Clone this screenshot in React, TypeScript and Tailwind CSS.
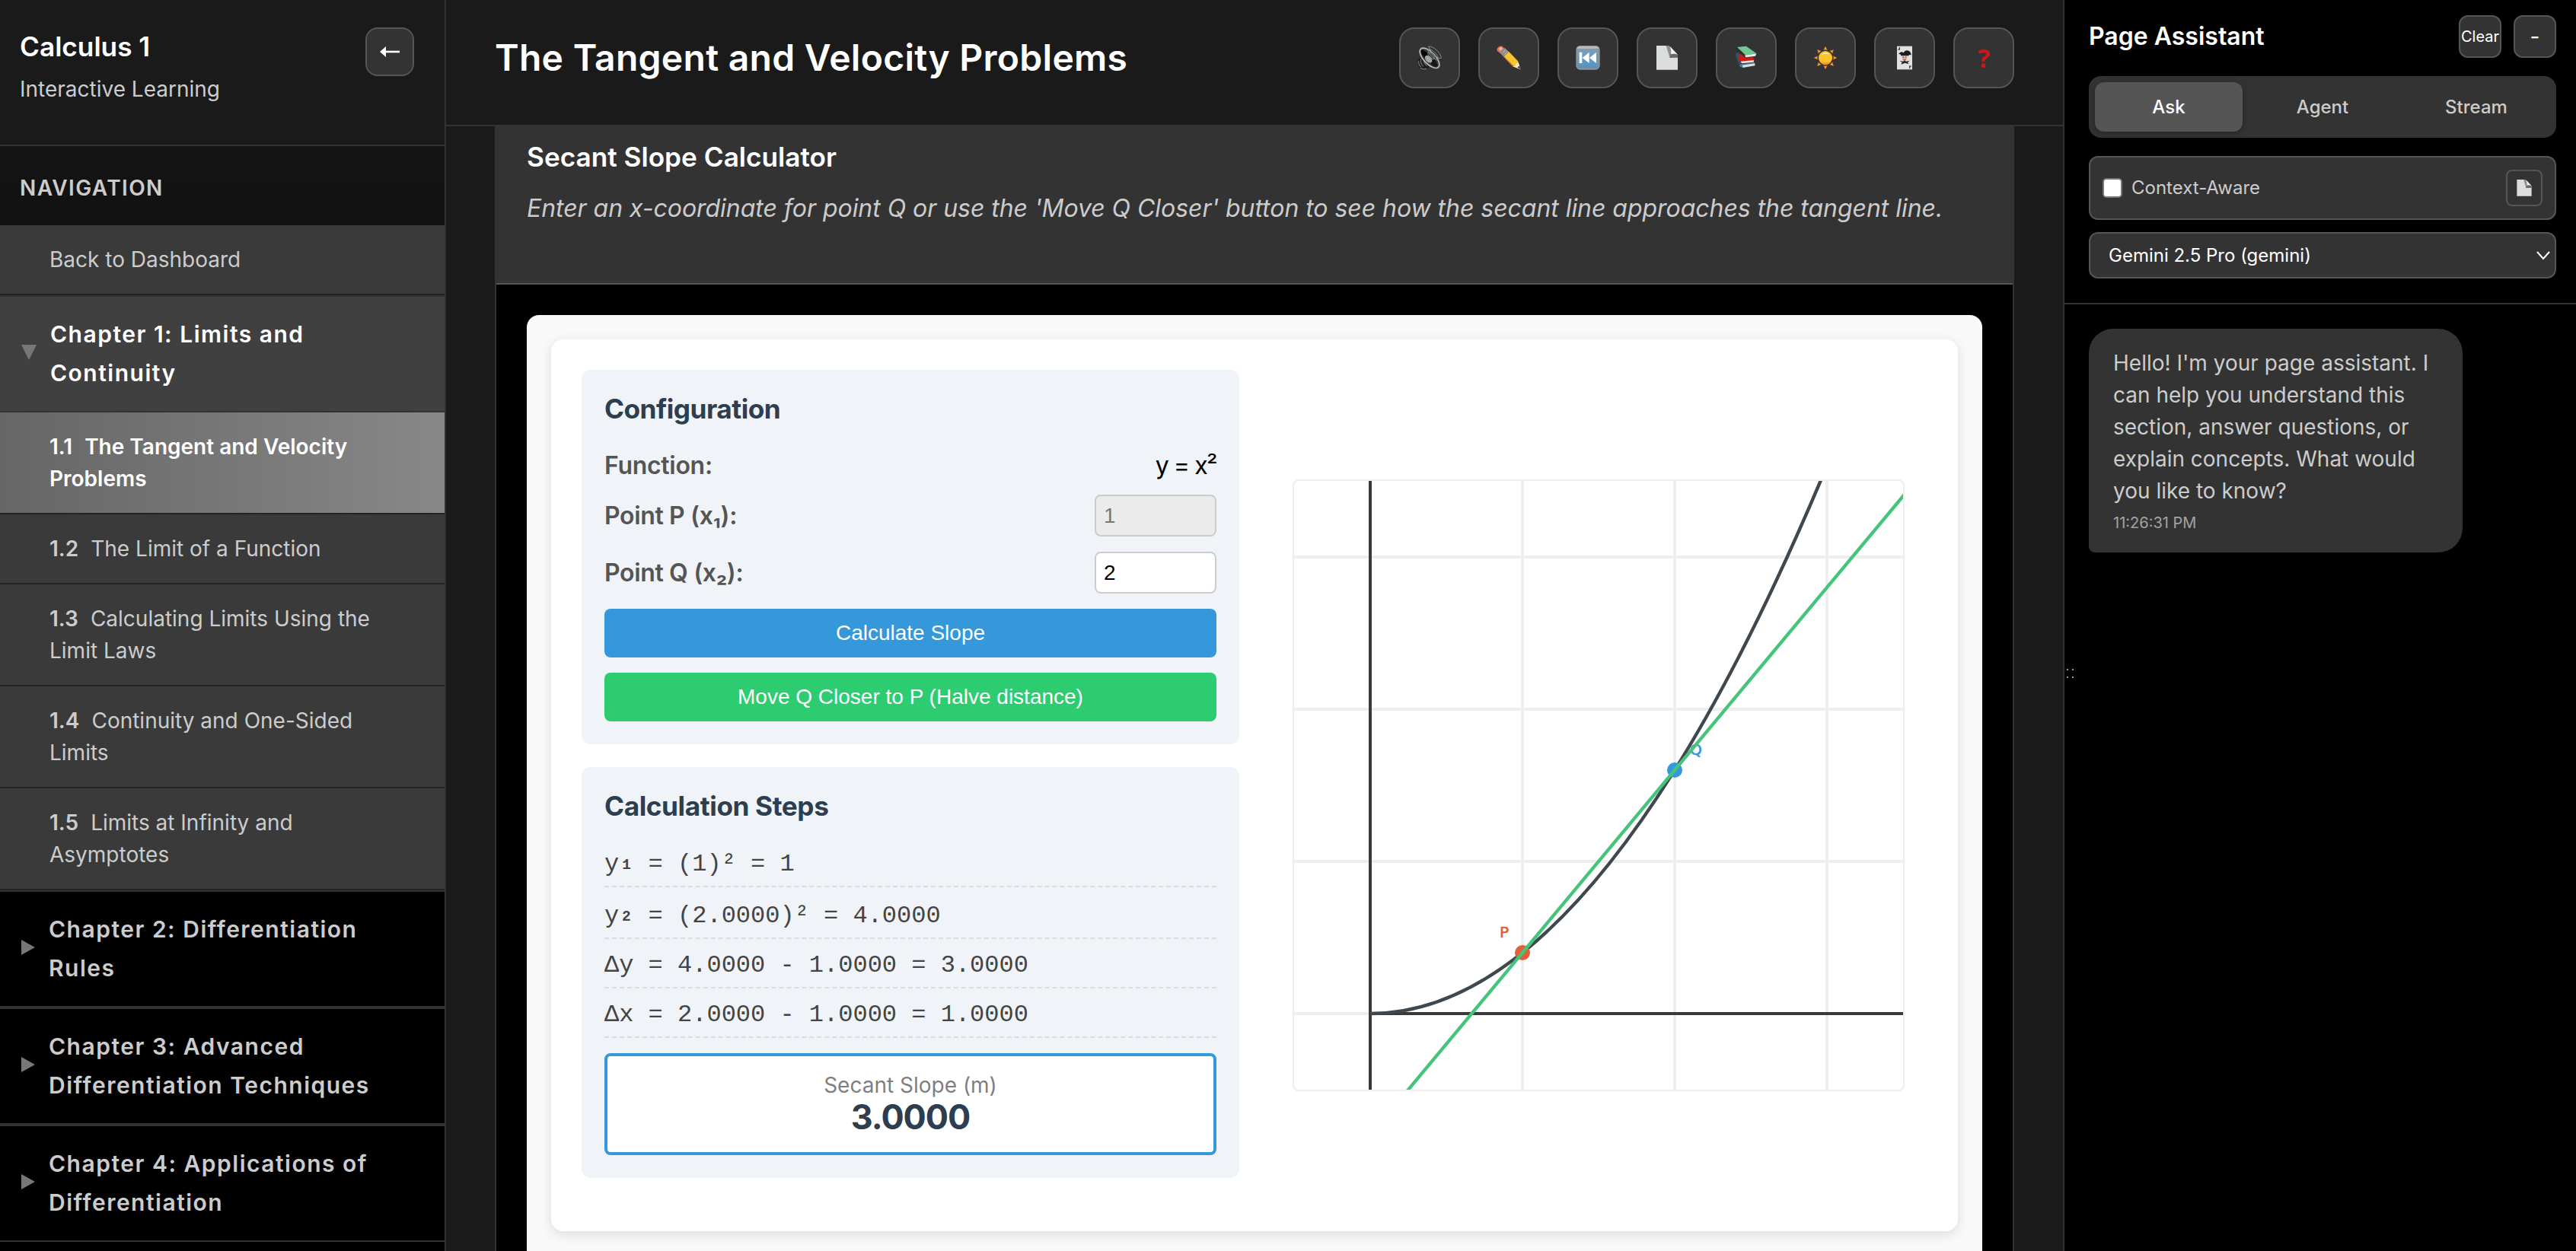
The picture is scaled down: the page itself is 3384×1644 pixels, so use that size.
import { useState } from "react";
import type { ReactNode } from "react";

const sections = [
  { number: "1.1", title: "The Tangent and Velocity Problems" },
  { number: "1.2", title: "The Limit of a Function" },
  { number: "1.3", title: "Calculating Limits Using the Limit Laws" },
  { number: "1.4", title: "Continuity and One-Sided Limits" },
  { number: "1.5", title: "Limits at Infinity and Asymptotes" },
];

const chapters = [
  "Chapter 2: Differentiation Rules",
  "Chapter 3: Advanced Differentiation Techniques",
  "Chapter 4: Applications of Differentiation",
];

const SpeakerIcon = () => (
  <svg viewBox="0 0 96 96" className="size-8 overflow-visible">
    <path d="M2 58Q8 44 22 44L54 72Q46 92 30 94Q8 94 2 76Z" fill="#1e1e1e" />
    <path d="M5 60Q3 74 14 84M14 52Q10 68 24 82M24 50Q22 66 38 80" fill="none" stroke="#6f6f6f" strokeWidth="3.5" />
    <path d="M12 88Q24 96 36 91" fill="none" stroke="#888" strokeWidth="3" />
    <ellipse cx="48" cy="49" rx="50" ry="23" transform="rotate(46 48 49)" fill="#3a3a3a" stroke="#bdbdbd" strokeWidth="5" />
    <path d="M15 16Q14 40 34 52L50 44Q44 24 15 16" fill="#050505" />
    <path d="M56 78Q76 88 80 78Q74 58 60 48L50 62Z" fill="#161616" />
    <ellipse cx="44" cy="53" rx="17" ry="11" transform="rotate(46 44 53)" fill="#a5a5a5" />
    <ellipse cx="54" cy="40" rx="17" ry="7" transform="rotate(46 54 40)" fill="none" stroke="#7fa0a3" strokeWidth="2.5" />
    <ellipse cx="62" cy="34" rx="27" ry="10" transform="rotate(46 62 34)" fill="none" stroke="#8c8c8c" strokeWidth="2.5" />
    <path d="M44 3Q60 2 78 20Q94 38 94 49Q84 54 68 38Q48 18 44 3" fill="none" stroke="#8a8a8a" strokeWidth="3" />
  </svg>
);

const PencilIcon = () => (
  <svg viewBox="0 0 96 96" className="size-8">
    <path d="M1 14Q8 0 22 2L32 12L14 30L3 22Z" fill="#e8714a" />
    <path d="M9 11Q14 5 20 7L24 13L15 21Z" fill="#d9c3bb" />
    <path d="M22 16L32 9L48 23L28 44L12 28Z" fill="#8b8b8b" />
    <path d="M24 28L36 16M31 35L43 22" stroke="#c4c4c4" strokeWidth="3" />
    <path d="M28 44L48 23L84 61L94 93L64 82Z" fill="#f7c52d" />
    <path d="M24 39L30 42L68 80L66 84Z" fill="#e2673b" />
    <path d="M64 82L74 80L76 71L86 66L95 94Z" fill="#f3e6d2" />
    <path d="M82 85L90 80L95 94Z" fill="#333" />
  </svg>
);

const RewindIcon = () => (
  <svg viewBox="0 0 96 96" className="size-8">
    <defs>
      <linearGradient id="rewind" x1="0" y1="0" x2="0" y2="1">
        <stop offset="0" stopColor="#8c9aa3" />
        <stop offset="0.45" stopColor="#5f9dc9" />
        <stop offset="1" stopColor="#5a92bb" />
      </linearGradient>
    </defs>
    <rect x="1" y="0" width="94" height="95" rx="16" fill="#8d9396" />
    <rect x="7" y="7" width="82" height="82" rx="9" fill="url(#rewind)" />
    <path d="M14 2H82Q90 4 92 12H4Q6 4 14 2" fill="#b9b9b9" />
    <path d="M14 26H25V69H14ZM53 26V69L26 48ZM81 26V69L54 48Z" fill="#fff" />
  </svg>
);

const PageIcon = ({ className }: { className: string }) => (
  <svg viewBox="0 0 96 96" className={className}>
    <path d="M6 0H54L90 36V95H6Z" fill="#dcdedd" />
    <path d="M54 0L90 36V46L58 48Q54 30 44 0Z" fill="#8e8e8e" />
    <path d="M60 3L88 34Q76 31 64 34Q64 16 60 3" fill="#f5f5f5" />
    <path d="M58 48L62 34Q76 30 90 37V47Z" fill="#686868" />
  </svg>
);

const BooksIcon = () => (
  <svg viewBox="0 0 96 96" className="size-8">
    <path d="M8 28L20 26L30 84L18 70L6 42Z" fill="#1f5578" />
    <path d="M22 74L80 66L84 78L34 88L22 82Z" fill="#477b9d" />
    <path d="M32 77L82 70L81 79L35 86Z" fill="#dbe0e0" />
    <path d="M16 32L72 40L82 60L28 66L16 54Z" fill="#cc1d14" />
    <path d="M26 62L78 57L77 65L30 70Z" fill="#ecdeda" />
    <path d="M10 4L40 2L88 32L86 42L44 48L30 36L6 16Z" fill="#28332c" />
    <path d="M12 6L48 2L87 30L46 38Z" fill="#70c795" />
    <path d="M42 38L88 31L84 41L46 46Z" fill="#eceeed" />
  </svg>
);

const SunIcon = () => (
  <svg viewBox="0 0 96 96" className="size-8">
    {[0, 45, 90, 135, 180, 225, 270, 315].map((angle) => (
      <path key={angle} d="M48 3L55 17Q48 14 41 17Z" fill="#f5b12c" stroke="#c9552a" strokeWidth="1.5" transform={`rotate(${angle} 48 48)`} />
    ))}
    <circle cx="48" cy="48" r="27" fill="#fac22d" />
    <path d="M26 62Q48 72 70 62Q62 75 48 75Q34 75 26 62" fill="#ee9d2d" />
    <path d="M32 36Q48 18 64 36Q48 28 32 36" fill="#fff0c4" />
  </svg>
);

const JokerIcon = () => (
  <svg viewBox="0 0 96 96" className="size-8">
    <rect x="18" y="2" width="60" height="92" fill="#e0e1e0" />
    <path d="M28 6V15H22M68 90V81H74" fill="none" stroke="#444" strokeWidth="4" />
    <path d="M24 34Q32 20 44 28Q50 16 64 20Q74 24 74 38Q66 32 64 40H34Q32 30 24 34" fill="#1d1d1d" />
    <path d="M37 41H59L56 55L48 60L40 55Z" fill="#cbb9b2" />
    <path d="M41 45H45M51 45H55" stroke="#333" strokeWidth="3" />
    <path d="M42 53Q48 59 54 53" fill="none" stroke="#e0592a" strokeWidth="4" />
    <path d="M28 59L42 62L48 58L54 62L68 59L60 67L64 73L50 68L34 74L38 66Z" fill="#262626" />
  </svg>
);

const toolbar: { name: string; icon: ReactNode }[] = [
  { name: "Read aloud", icon: <SpeakerIcon /> },
  { name: "Draw", icon: <PencilIcon /> },
  { name: "Previous", icon: <RewindIcon /> },
  { name: "Notes", icon: <PageIcon className="size-8" /> },
  { name: "Resources", icon: <BooksIcon /> },
  { name: "Theme", icon: <SunIcon /> },
  { name: "Flashcards", icon: <JokerIcon /> },
  {
    name: "Help",
    icon: <span className="font-['Open_Sans',sans-serif] text-[34px] leading-8 font-bold text-[#cc1616]">?</span>,
  },
];

const Sidebar = () => (
  <aside className="flex w-[586px] shrink-0 flex-col border-r-2 border-[#333] bg-linear-to-b from-[#1a1a1a] to-black text-[28px] leading-[42px] text-[#ccc]">
    <div className="flex h-48 shrink-0 justify-between border-b-2 border-[#333] bg-[#1a1a1a] pt-[35px] pr-10 pl-[26px]">
      <div>
        <h2 className="text-[35.2px] leading-[53px] font-semibold text-white">Calculus 1</h2>
        <p className="mt-2">Interactive Learning</p>
      </div>
      <button aria-label="Collapse" className="mt-px flex size-16 items-center justify-center rounded-2xl border-2 border-[#555] bg-[#333]">
        <svg viewBox="0 0 26 16" className="h-4 w-[26px]">
          <path d="M0 8L8 1V15Z" fill="#fff" />
          <path d="M6 8H26" stroke="#fff" strokeWidth="2.6" />
        </svg>
      </button>
    </div>
    <div className="flex h-[104px] shrink-0 items-center pt-1.5 pl-[26px] font-semibold tracking-[1.4px]">NAVIGATION</div>
    <a className="block shrink-0 border-b-2 border-[#222] bg-[#3a3a3a] py-6 pl-[65px]">Back to Dashboard</a>

    <div className="flex h-[154px] shrink-0 items-center border-y-2 border-[#333] bg-[#404040] pl-7">
      <svg viewBox="0 0 20 20" className="mt-[-4px] mr-[18px] size-5 shrink-0">
        <path d="M0 0H20L10 20Z" fill="#777" />
      </svg>
      <span className="w-[470px] text-[30px] leading-[51px] font-semibold tracking-[1.5px] text-white">Chapter 1: Limits and Continuity</span>
    </div>
    {sections.map((section, i) => (
      <a
        key={section.number}
        className={
          i === 0
            ? "block shrink-0 border-b-2 border-[#222] bg-linear-to-r from-[#666] to-[#888] py-6 pr-12 pl-[65px] font-semibold text-white"
            : "block shrink-0 border-b-2 border-[#222] bg-[#3a3a3a] py-6 pr-12 pl-[65px]"
        }
      >
        <span className="mr-4 font-semibold">{section.number}</span>
        {section.title}
      </a>
    ))}
    {chapters.map((chapter) => (
      <div key={chapter} className="flex h-[154px] shrink-0 items-center border-y-2 border-[#333] pl-7">
        <svg viewBox="0 0 18 20" className="mt-[-4px] mr-[18px] h-5 w-[18px] shrink-0">
          <path d="M0 0L18 10L0 20Z" fill="#777" />
        </svg>
        <span className="w-[470px] text-[30px] leading-[51px] font-semibold tracking-[1.5px]">{chapter}</span>
      </div>
    ))}
    <div className="h-40 shrink-0 bg-black" />
  </aside>
);

// x: 200px per unit, y: 80px per unit, origin at (100, 700)
const SecantPlot = () => (
  <svg viewBox="0 0 800 800" className="size-[804px] rounded-lg border-2 border-[#eee] bg-white">
    {[300, 500, 700].map((x) => (
      <path key={x} d={`M${x} 0V800`} stroke="#eeeef0" strokeWidth="4" />
    ))}
    {[100, 300, 500, 700].map((y) => (
      <path key={y} d={`M0 ${y}H800`} stroke="#eee" strokeWidth="4" />
    ))}
    <path d="M100 0V800M100 700H800" stroke="#3a3a3a" strokeWidth="4" />
    <path d="M100 700Q400 700 700 -20" fill="none" stroke="#3f474f" strokeWidth="4.4" />
    <circle cx="300" cy="620" r="10" fill="#e0603a" />
    <circle cx="500" cy="380" r="10" fill="#3498db" />
    <text x="270" y="600" fill="#e0603a" stroke="#e0603a" strokeWidth="0.7" fontSize="20" className="font-['DejaVu_Sans',sans-serif]">P</text>
    <text x="520" y="360" fill="#3498db" stroke="#3498db" strokeWidth="0.7" fontSize="20" className="font-['DejaVu_Sans',sans-serif]">Q</text>
    <path d="M100 860L900 -100" stroke="#45c47a" strokeWidth="4.4" />
  </svg>
);

const Calculator = () => {
  const [x2, setX2] = useState("2");

  return (
    <div className="grid grid-cols-2 gap-10 rounded-2xl bg-white p-10 shadow-[0_4px_16px_rgba(0,0,0,0.12)]">
      <div className="text-[32px]">
        <div className="mb-[30px] h-[492px] rounded-xl bg-[#f0f4f8] p-[30px]">
          <h3 className="mb-[34px] text-[35.2px] leading-[42px] font-bold tracking-[-0.5px] text-[#2c3e50]">Configuration</h3>
          <div className="mb-5 flex h-[38px] items-center justify-between pt-0.5">
            <span className="font-semibold tracking-[-0.3px] text-[#555]">Function:</span>
            <span className="tracking-[-1.4px] text-black">y = x²</span>
          </div>
          <div className="mb-5 flex h-[55px] items-center justify-between">
            <label className="font-semibold tracking-[-0.35px] text-[#555]">Point P (x₁):</label>
            <input
              disabled
              value="1"
              className="h-[55px] w-40 rounded-lg border-2 border-[#ccc] bg-[#ebebeb] px-2.5 font-['Liberation_Sans',sans-serif] text-[28px] text-[#777]"
            />
          </div>
          <div className="mb-5 flex h-[55px] items-center justify-between">
            <label className="font-semibold tracking-[-0.35px] text-[#555]">Point Q (x₂):</label>
            <input
              value={x2}
              onChange={(e) => setX2(e.target.value)}
              className="h-[55px] w-40 rounded-lg border-2 border-[#ccc] bg-white px-2.5 font-['Liberation_Sans',sans-serif] text-[28px] text-black"
            />
          </div>
          <button className="mb-5 block h-16 w-full rounded-lg bg-[#3498db] font-['Liberation_Sans',sans-serif] text-[28px] leading-16 text-white">
            Calculate Slope
          </button>
          <button className="block h-16 w-full rounded-lg bg-[#2ecc71] font-['Liberation_Sans',sans-serif] text-[28px] leading-16 text-white">
            Move Q Closer to P (Halve distance)
          </button>
        </div>

        <div className="mb-[30px] h-[540px] rounded-xl bg-[#f0f4f8] p-[30px]">
          <h3 className="mb-5 text-[35.2px] leading-[42px] font-bold tracking-[-0.4px] text-[#2c3e50]">Calculation Steps</h3>
          <div className="mb-5 font-['Liberation_Mono',monospace] leading-[38px] text-[#444]">
            <div className="flex h-[66px] items-end border-b-2 border-dashed border-[#ddd] pb-[9px]">
              y<span className="mb-[5px] font-bold">₁</span>
              <span className="whitespace-pre"> = (1)² = 1</span>
            </div>
            <div className="flex h-[68px] items-end border-b-2 border-dashed border-[#ddd] pb-[9px]">
              y<span className="mb-[5px] font-bold">₂</span>
              <span className="whitespace-pre"> = (2.0000)² = 4.0000</span>
            </div>
            <div className="flex h-[65px] items-end border-b-2 border-dashed border-[#ddd] pb-[9px]">Δy = 4.0000 - 1.0000 = 3.0000</div>
            <div className="flex h-[65px] items-end border-b-2 border-dashed border-[#ddd] pb-[9px]">Δx = 2.0000 - 1.0000 = 1.0000</div>
          </div>
          <div className="h-[134px] rounded-lg border-4 border-[#3498db] bg-white pt-[21px] text-center">
            <div className="text-[28px] leading-[34px] text-[#7f7f7f]">Secant Slope (m)</div>
            <div className="text-[44.8px] leading-[50px] font-bold tracking-[-1px] text-[#2c3e50]">3.0000</div>
          </div>
        </div>
      </div>
      <div className="flex items-center justify-center">
        <SecantPlot />
      </div>
    </div>
  );
};

const Assistant = () => (
  <aside className="flex flex-1 border-l-2 border-[#333] bg-black text-[24px]">
    {/* resize handle */}
    <div className="flex w-4 flex-col pt-[879px] pl-[3px]">
      <div className="grid w-[9px] grid-cols-2 gap-x-[5px] gap-y-2">
        <i className="size-0.5 bg-[#999]" />
        <i className="size-0.5 bg-[#999]" />
        <i className="size-0.5 bg-[#999]" />
        <i className="size-0.5 bg-[#999]" />
      </div>
    </div>
    <div className="-ml-4 flex-1">
      <div className="h-[400px] border-b-2 border-[#333] pt-5 pr-[26px] pl-8">
        <div className="mb-6 flex items-center justify-between">
          <h2 className="text-[32px] leading-[46px] font-semibold text-white">Page Assistant</h2>
          <div className="flex gap-4 text-white">
            <button className="flex size-14 items-center justify-center rounded-xl border-2 border-[#555] bg-[#333] text-[20px]">Clear</button>
            <button className="flex size-14 items-center justify-center rounded-xl border-2 border-[#555] bg-[#333] text-[28px]">-</button>
          </div>
        </div>
        <div className="mb-6 grid h-[81px] grid-cols-3 gap-2 rounded-2xl bg-[#333] p-2 font-medium text-[#ccc]">
          <button className="rounded-xl bg-[#555] text-white shadow-[0_2px_8px_rgba(0,0,0,0.3)]">Ask</button>
          <button>Agent</button>
          <button>Stream</button>
        </div>
        <div className="mb-4 flex h-[84px] items-center rounded-xl border-2 border-[#555] bg-[#333] pr-4 pl-4 text-[#ccc]">
          <span className="mr-3 size-[26px] rounded-[5px] border-2 border-[#767676] bg-white" />
          <span className="flex-1">Context-Aware</span>
          <button aria-label="Page context" className="flex size-12 items-center justify-center rounded-lg border-2 border-[#555]">
            <PageIcon className="size-[22px]" />
          </button>
        </div>
        <div className="flex h-[61px] items-center justify-between rounded-xl border-2 border-[#555] bg-[#333] pr-[6px] pl-6 text-white">
          Gemini 2.5 Pro (gemini)
          <svg viewBox="0 0 18 12" className="h-3 w-[18px]">
            <path d="M1 1L9 10L17 1" fill="none" stroke="#fff" strokeWidth="2" />
          </svg>
        </div>
      </div>
      <div className="mt-8 ml-8 h-[294px] w-[491px] rounded-[32px] rounded-bl-lg bg-[#333] px-8 py-6">
        <p className="w-[424px] text-[28px] leading-[42px] text-[#ccc]">
          Hello! I'm your page assistant. I can help you understand this section, answer questions, or explain concepts. What would you like to know?
        </p>
        <p className="mt-1.5 text-[20px] leading-[30px] text-[#a3a3a3]">11:26:31 PM</p>
      </div>
    </div>
  </aside>
);

export default function App() {
  return (
    <div className="flex h-[1644px] w-[3384px] overflow-hidden bg-[#1a1a1a] font-['Inter',sans-serif]">
      <Sidebar />
      <main className="flex w-[2124px] shrink-0 flex-col">
        <header className="flex h-[166px] shrink-0 items-start justify-between border-b-2 border-[#333] px-16 pt-9">
          <h1 className="text-[48px] leading-20 font-semibold tracking-[0.27px] text-white">The Tangent and Velocity Problems</h1>
          <div className="flex gap-6">
            {toolbar.map((tool) => (
              <button key={tool.name} aria-label={tool.name} className="flex size-20 items-center justify-center rounded-[20px] border-2 border-[#555] bg-[#333]">
                {tool.icon}
              </button>
            ))}
          </div>
        </header>
        <section className="mx-16 flex-1 border-x-2 border-[#333] bg-black">
          <div className="h-[208px] border-b-2 border-[#555] bg-[#333] px-10 pt-[19px]">
            <h2 className="text-[35.2px] leading-[42px] font-semibold text-white">Secant Slope Calculator</h2>
            <p className="mt-[21px] text-[32px] leading-[52px] tracking-[-0.04px] text-[#ccc] italic">
              Enter an x-coordinate for point Q or use the 'Move Q Closer' button to see how the secant line approaches the tangent line.
            </p>
          </div>
          <div className="mx-10 mt-10 rounded-t-2xl bg-[#f9f9f9] p-8">
            <Calculator />
          </div>
        </section>
      </main>
      <Assistant />
    </div>
  );
}
